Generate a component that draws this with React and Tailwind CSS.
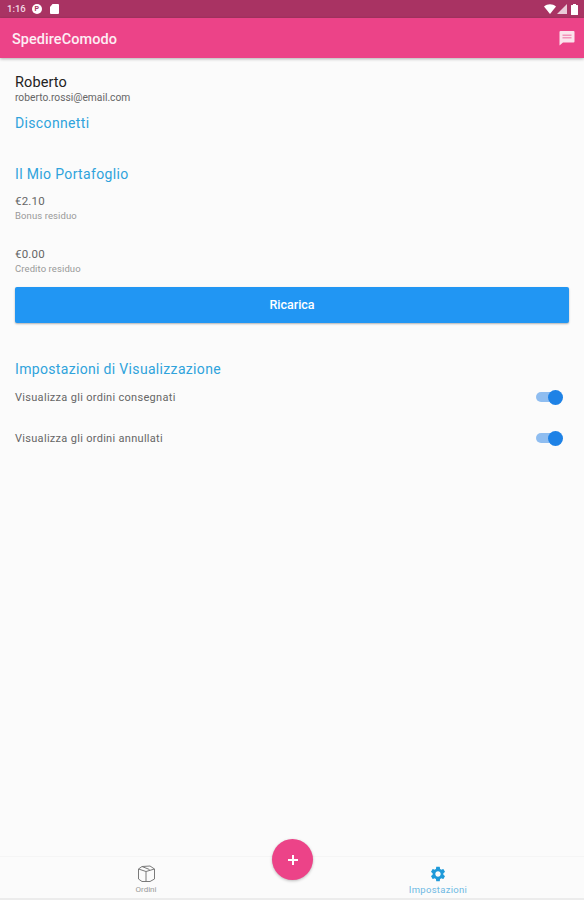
import React from "react";
import { MdSettings } from "react-icons/md";

const Toggle = () => (
  <div className="relative w-[26px] h-[10px] mb-[2px] rounded-full bg-[#8fbdf0]">
    <div className="absolute -right-px -top-[2.5px] w-[15px] h-[15px] rounded-full bg-[#1e82e6]" />
  </div>
);

const ToggleRow = ({ label }) => (
  <div className="flex items-center justify-between pr-[7px] h-[16px]">
    <span className="text-[11px] text-[#666] tracking-[0.3px]">{label}</span>
    <Toggle />
  </div>
);

const WalletRow = ({ amount, label }) => (
  <div>
    <p className="text-[11.5px] leading-[14px] text-[#666] tracking-[0.2px]">{amount}</p>
    <p className="text-[9.5px] leading-[12px] mt-[2px] text-[#999] tracking-[0.1px]">{label}</p>
  </div>
);

const StatusBar = () => (
  <div className="h-[18px] bg-[#a93363] flex items-center justify-between pl-[7px] pr-[6px] text-white">
    <div className="flex items-center gap-[6px]">
      <span className="text-[9.5px] font-medium text-[#f3dbe5]">1:16</span>
      <div className="w-[10px] h-[10px] rounded-full bg-white flex items-center justify-center">
        <span className="text-[7px] leading-none font-bold text-[#a93363]">P</span>
      </div>
      <svg width="9" height="10" viewBox="0 0 9 10" className="ml-[2px]">
        <path d="M2.5 0H8a1 1 0 0 1 1 1v8a1 1 0 0 1-1 1H1a1 1 0 0 1-1-1V3z" fill="#fff" />
      </svg>
    </div>
    <div className="flex items-center gap-[1px]">
      <svg width="12" height="10" viewBox="0 0 12 10">
        <path d="M0 2.5C3.5-.5 8.500-.5 12 2.500L6 10z" fill="#fff" />
      </svg>
      <svg width="10" height="10" viewBox="0 0 10 10">
        <path d="M10 0v10H0z" fill="#fff" fillOpacity="0.75" />
      </svg>
      <svg width="7" height="11" viewBox="0 0 7 11" className="ml-[3px]">
        <path d="M2 0h3v1h1.500a.5.5 0 0 1 .5.500V10.500a.5.5 0 0 1-.5.500H.5a.5.5 0 0 1-.5-.5V1.500A.5.5 0 0 1 .5 1H2z" fill="#fff" />
      </svg>
    </div>
  </div>
);

const App = () => {
  return (
    <div className="relative w-[584px] h-[900px] overflow-hidden bg-[#fbfbfb] flex flex-col font-['Roboto',sans-serif]">
      <StatusBar />
      <header className="relative z-10 h-[40px] bg-[#ec4388] shadow-[0_1px_3px_rgba(0,0,0,0.3)] flex items-center justify-between pl-[12px] pr-[9px]">
        <span className="mt-[3px] text-[14.5px] font-medium text-[#fdeef4] tracking-[0.05px]">SpedireComodo</span>
        <svg width="16" height="16" viewBox="0 0 16 16">
          <path d="M1.500 1h13a1 1 0 0 1 1 1v9.500a1 1 0 0 1-1 1H4L.5 15.500V2a1 1 0 0 1 1-1z" fill="#fbe3ec" />
          <path d="M3.500 4.500h9V6h-9zM3.500 7h9v1.500h-9z" fill="#ec4388" fillOpacity="0.5" />
        </svg>
      </header>

      <main className="flex-1 px-[15px] pt-[16px]">
        <p className="text-[14.5px] leading-[17px] text-[#222] tracking-[0.1px]">Roberto</p>
        <p className="text-[10.25px] leading-[13px] text-[#666]">roberto.rossi@email.com</p>
        <p className="text-[14px] leading-[18px] mt-[10px] text-[#2fa3dc] tracking-[0.35px]">Disconnetti</p>

        <h2 className="text-[14px] leading-[18px] mt-[33px] text-[#2fa3dc] tracking-[0.35px]">Il Mio Portafoglio</h2>
        <div className="mt-[11px] flex flex-col gap-[25px]">
          <WalletRow amount="€2.10" label="Bonus residuo" />
          <WalletRow amount="€0.00" label="Credito residuo" />
        </div>

        <button className="mt-[12px] w-[554px] h-[36px] rounded-[2px] bg-[#2196f3] shadow-[0_1px_2px_rgba(0,0,0,0.3)] text-white text-[12.5px] font-medium">
          Ricarica
        </button>

        <h2 className="text-[14px] leading-[18px] mt-[37px] text-[#2fa3dc] tracking-[0.33px]">Impostazioni di Visualizzazione</h2>
        <div className="mt-[12px] flex flex-col gap-[25px]">
          <ToggleRow label="Visualizza gli ordini consegnati" />
          <ToggleRow label="Visualizza gli ordini annullati" />
        </div>
      </main>

      <nav className="relative h-[44px] border-t border-[#f5f5f5] bg-[#fbfbfb] border-b-2 border-b-[#ececec] flex">
        <div className="w-[292px] flex flex-col items-center pt-[8px]">
          <svg width="19" height="18" viewBox="0 0 19 18" fill="none" stroke="#7a7a7a" strokeWidth="1">
            <path d="M5 1.500 13 1l4.500 3v10L13 16.500H5L1.500 14V4z" />
            <path d="M1.500 4 9 6.500 17.500 4M9 6.500v10M5 1.500l7.500 3" />
          </svg>
          <span className="text-[8px] leading-[10px] mt-[2px] text-[#999]">Ordini</span>
        </div>
        <div className="w-[292px] flex flex-col items-center pt-[8px]">
          <MdSettings size={18} className="text-[#1f9ad9]" />
          <span className="text-[9.5px] leading-[10px] mt-[2px] text-[#6db9e3] tracking-[0.3px]">Impostazioni</span>
        </div>
        <button className="absolute left-[272px] -top-[18px] w-[41px] h-[41px] rounded-full bg-[#ec4388] shadow-[0_1px_3px_rgba(0,0,0,0.25)] flex items-center justify-center">
          <svg width="10" height="10" viewBox="0 0 10 10">
            <path d="M4 0h2v4h4v2H6v4H4V6H0V4h4z" fill="#fff" />
          </svg>
        </button>
      </nav>
    </div>
  );
};

export default App;
